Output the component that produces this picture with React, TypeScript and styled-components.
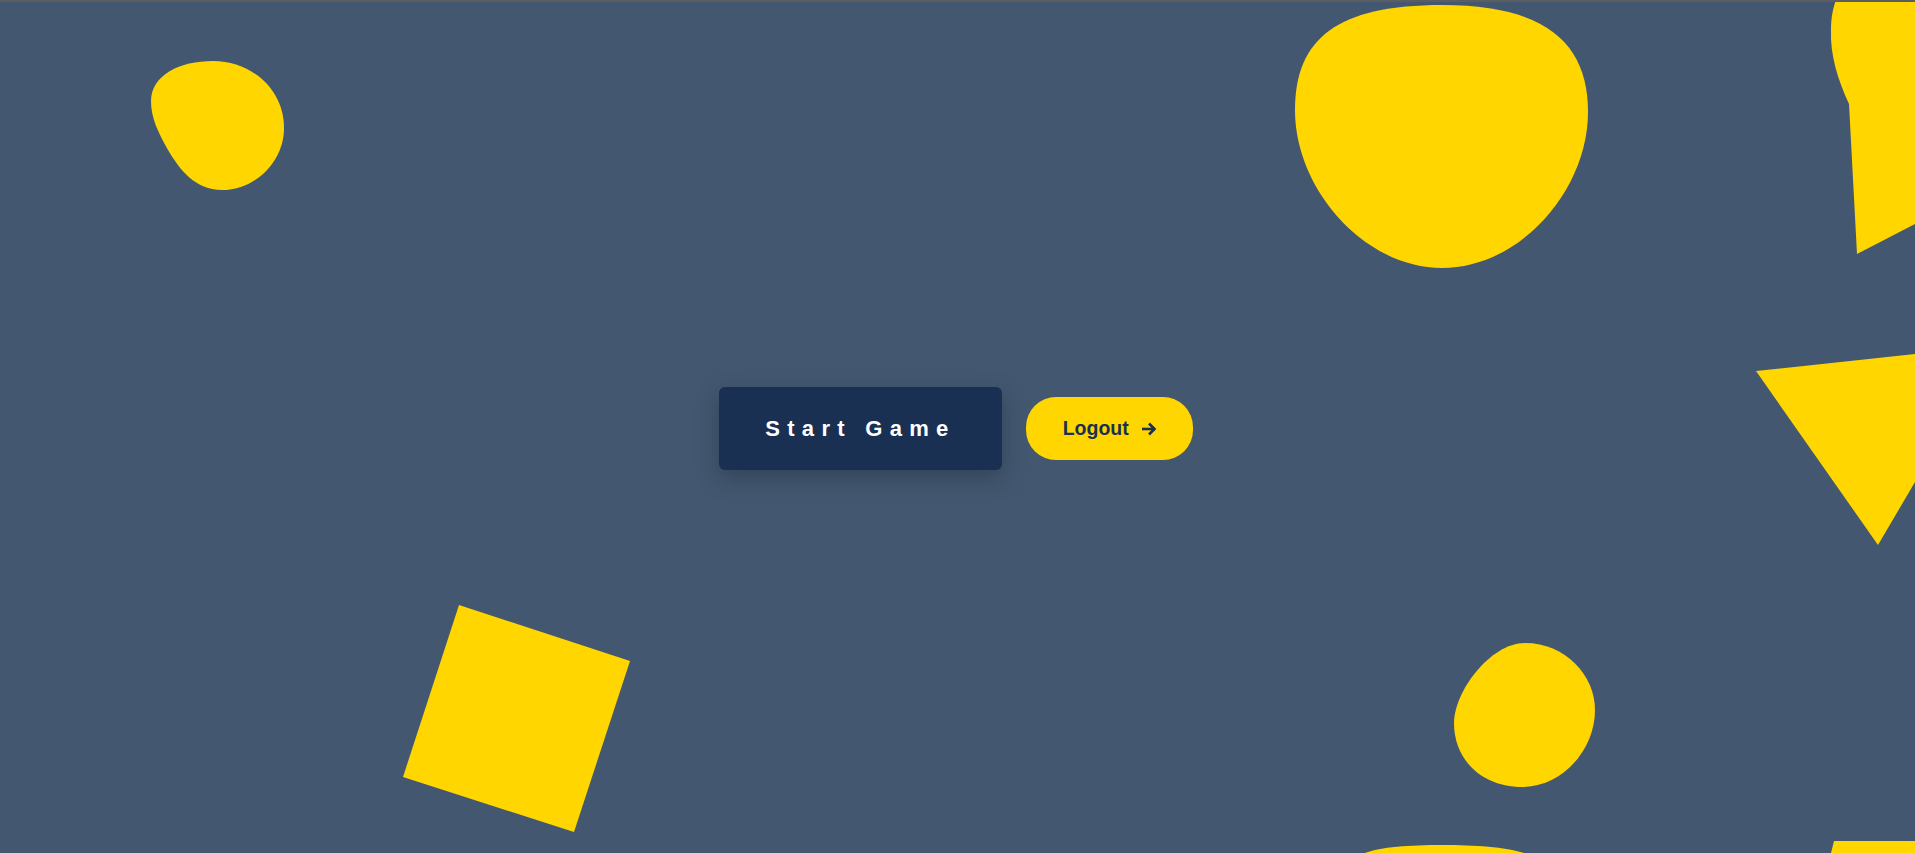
import React from "react";
import styled, { createGlobalStyle } from "styled-components";

const GlobalStyle = createGlobalStyle`
  html, body {
    margin: 0;
    padding: 0;
    height: 100%;
    overflow: hidden;
  }
  body {
    font-family: "Liberation Sans", Arial, sans-serif;
    background: #435870;
  }
  * { box-sizing: border-box; }
`;

const Page = styled.main`
  position: relative;
  width: 100vw;
  height: 100vh;
  background: #435870;
  overflow: hidden;
`;

const TopEdge = styled.div`
  position: absolute;
  left: 0;
  right: 0;
  top: 0;
  height: 2px;
  background: #5b5e61;
  z-index: 3;
`;

const ShapeLayer = styled.svg`
  position: absolute;
  inset: 0;
  width: 100%;
  height: 100%;
  z-index: 0;
`;

const Shape = styled.path`
  fill: #ffd600;
`;

const Stage = styled.div`
  position: relative;
  z-index: 1;
  height: 100%;
  display: flex;
  align-items: center;
  justify-content: center;
  gap: 24px;
  padding: 4px 3px 0 0;
`;

const StartButton = styled.button`
  border: none;
  border-radius: 6px;
  background: #1a3053;
  color: #ffffff;
  font-family: "Liberation Sans", Arial, sans-serif;
  font-weight: 700;
  font-size: 22px;
  line-height: 25px;
  letter-spacing: 7.3px;
  padding: 29px 46px;
  box-shadow: 0 8px 22px rgba(20, 30, 50, 0.35);
  cursor: pointer;
`;

const LogoutButton = styled.button`
  display: inline-flex;
  align-items: center;
  gap: 12px;
  height: 63px;
  padding: 0 36px 0 37px;
  border: none;
  border-radius: 30px;
  background: #ffd600;
  color: #1a3053;
  font-family: "Liberation Sans", Arial, sans-serif;
  font-weight: 700;
  font-size: 19.5px;
  cursor: pointer;
`;

const ArrowIcon = styled.svg`
  width: 16px;
  height: 16px;
  flex: none;
`;

const shapes = [
  // top-left blob
  "M213,61 C252,61 284,90 284,128 C284,162 255,190 222,190 C195,190 180,170 168,150 C158,132 151,118 151,101 C151,75 180,61 213,61 Z",
  // big top blob
  "M1442,5 C1548,5 1588,45 1588,112 C1588,190 1520,268 1442,268 C1365,268 1295,190 1295,110 C1295,38 1338,5 1442,5 Z",
  // top-right partial shape
  "M1836,0 L1915,0 L1915,224 L1857,254 L1849,104 C1838,80 1830,55 1831,30 C1831,18 1833,8 1836,0 Z",
  // right triangle
  "M1756,371 L1915,354 L1915,482 L1878,545 Z",
  // bottom-right blob
  "M1525,643 C1565,643 1595,675 1595,710 C1595,750 1562,787 1522,787 C1482,787 1454,760 1454,723 C1454,692 1490,643 1525,643 Z",
  // rotated square
  "M459,605 L630,661 L574,832 L403,777 Z",
  // bottom blob peeking
  "M1365,853 C1380,847 1410,845 1442,845 C1475,845 1505,847 1524,853 Z",
  // bottom-right corner shape
  "M1834,841 L1915,841 L1915,853 L1831,853 Z",
];

export default function App() {
  return (
    <>
      <GlobalStyle />
      <Page>
        <TopEdge />
        <ShapeLayer viewBox="0 0 1915 853" preserveAspectRatio="none" aria-hidden="true">
          {shapes.map((d, i) => (
            <Shape key={i} d={d} />
          ))}
        </ShapeLayer>
        <Stage>
          <StartButton type="button">Start Game</StartButton>
          <LogoutButton type="button">
            Logout
            <ArrowIcon viewBox="0 0 16 16" fill="none" stroke="currentColor" strokeWidth="2.6" strokeLinecap="butt" strokeLinejoin="miter">
              <path d="M1 8 H14" />
              <path d="M8 2.5 L13.5 8 L8 13.5" />
            </ArrowIcon>
          </LogoutButton>
        </Stage>
      </Page>
    </>
  );
}
